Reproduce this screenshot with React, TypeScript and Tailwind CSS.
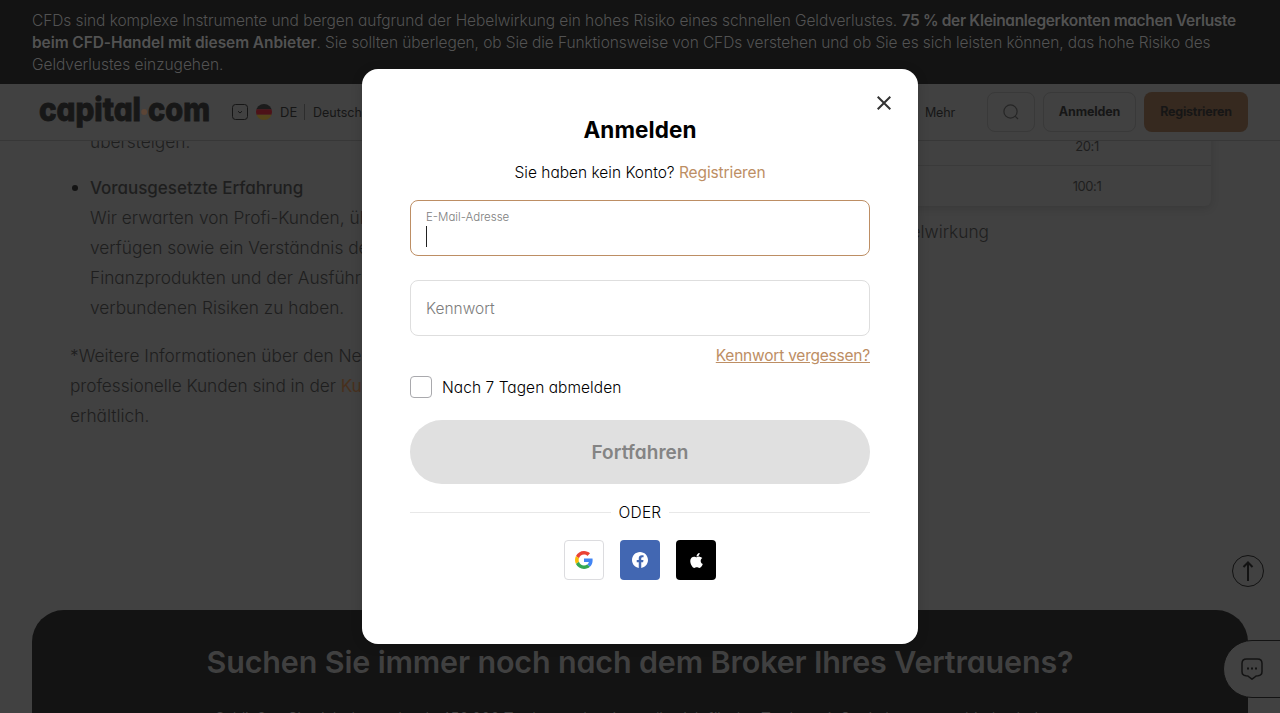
import { FaApple } from 'react-icons/fa';

function Banner() {
  return (
    <div className="h-[84px] shrink-0 bg-[#131313] pt-[9.5px] pl-8 text-[15.5px] leading-[22.4px] font-light text-[#525252] whitespace-nowrap">
      <div>
        <span className="tracking-[-0.07px]">
          CFDs sind komplexe Instrumente und bergen aufgrund der Hebelwirkung ein hohes Risiko eines schnellen Geldverlustes.
        </span>{' '}
        <b className="font-semibold tracking-[-0.33px]">75 % der Kleinanlegerkonten machen Verluste</b>
      </div>
      <div>
        <b className="font-semibold tracking-[-0.08px]">beim CFD-Handel mit diesem Anbieter</b>
        <span className="tracking-[-0.1px]">
          . Sie sollten überlegen, ob Sie die Funktionsweise von CFDs verstehen und ob Sie es sich leisten können, das hohe Risiko des
        </span>
      </div>
      <div className="tracking-[-0.04px]">Geldverlustes einzugehen.</div>
    </div>
  );
}

function Logo() {
  return (
    <svg className="ml-[38px] block" width="174" height="44" viewBox="0 0 174 44" fill="#171717" fontWeight="800" fontSize="32">
      <text x="1" y="31" textLength="102" lengthAdjust="spacingAndGlyphs" stroke="#171717" strokeWidth="0.9">capital</text>
      <text x="110" y="31" textLength="62" lengthAdjust="spacingAndGlyphs" stroke="#171717" strokeWidth="0.9">com</text>
      <circle cx="106.200" cy="22" r="3" fill="#5c4536" />
    </svg>
  );
}

function Header() {
  return (
    <header className="flex h-[57px] shrink-0 items-center border-b border-[#373737] bg-[#414141] text-[12.5px] text-[#161616]">
      <Logo />
      <svg className="ml-5" width="16" height="16" viewBox="0 0 16 16" fill="none" stroke="#161616">
        <rect x="0.5" y="0.5" width="15" height="15" rx="3" />
        <path d="M6 7.2l2 1.8 2-1.8" />
      </svg>
      <svg className="ml-2" width="16" height="16" viewBox="0 0 16 16">
        <clipPath id="flag"><circle cx="8" cy="8" r="8" /></clipPath>
        <g clipPath="url(#flag)">
          <path fill="#1b1b1b" d="M0 0h16v5.3H0z" />
          <path fill="#4d1218" d="M0 5.3h16v5.4H0z" />
          <path fill="#54451a" d="M0 10.7h16V16H0z" />
        </g>
      </svg>
      <span className="mt-px ml-2 w-6 text-[13px]">DE</span>
      <span className="h-4 w-px bg-[#2d2d2d]" />
      <span className="mt-[2px] ml-2">Deutsch</span>
      <nav className="mt-[2px] mr-8 ml-auto tracking-[-0.15px]">Mehr</nav>
      <div className="mr-8 flex gap-2 text-[12.5px] font-bold">
        <div className="flex h-10 w-12 items-center justify-center rounded-lg border border-[#393939]">
          <svg width="16" height="16" viewBox="0 0 16 16" fill="none" stroke="#262626" strokeWidth="1.2">
            <circle cx="7.5" cy="7.5" r="6.6" />
            <path d="M12.3 12.3l2.7 2.7" />
          </svg>
        </div>
        <div className="flex h-10 w-[93px] items-center justify-center rounded-lg border border-[#393939] tracking-[-0.15px]">Anmelden</div>
        <div className="flex h-10 w-[104px] items-center justify-center rounded-lg bg-[#36291f] tracking-[-0.25px]">Registrieren</div>
      </div>
    </header>
  );
}

function Content() {
  return (
    <main className="flex h-[469px] shrink-0 justify-between overflow-hidden text-[17.3px] leading-[30px] font-light whitespace-nowrap text-[#1e1e1e]">
      <div className="-mt-[14px] w-[560px] pl-[70px]">
        <ul className="pl-5">
          <li>übersteigen.</li>
          <li className="mt-[16px]">
            <div className="-ml-5 flex items-center">
              <span className="mr-[12px] ml-[2px] size-[6px] rounded-full bg-[#131313]" />
              <b className="text-[17px] font-medium tracking-[-0.03px]">Vorausgesetzte Erfahrung</b>
            </div>
            <div>Wir erwarten von Profi-Kunden, über</div>
            <div>verfügen sowie ein Verständnis der</div>
            <div>Finanzprodukten und der Ausführung</div>
            <div>verbundenen Risiken zu haben.</div>
          </li>
        </ul>
        <div className="mt-[18px]">
          <div>*Weitere Informationen über den Neu</div>
          <div className="tracking-[-0.06px]">professionelle Kunden sind in der <span className="font-normal text-[#48301d]">Kunden</span></div>
          <div>erhältlich.</div>
        </div>
      </div>
      <div className="-mt-[15px] w-[571px] pr-[69px]">
        <div className="rounded-md text-[13px] leading-none font-normal tracking-[-0.4px] shadow-[0_2px_8px_rgba(0,0,0,0.13)]">
          <div className="flex h-10 items-center justify-end border-b border-[#3a3a3a]">
            <span className="w-[248px] pt-[2px] text-center">20:1</span>
          </div>
          <div className="flex h-10 items-center justify-end">
            <span className="w-[248px] text-center">100:1</span>
          </div>
        </div>
        <div className="mt-[11px] w-[280px] text-right">Hebelwirkung</div>
      </div>
    </main>
  );
}

function Promo() {
  return (
    <section className="mx-8 h-[240px] shrink-0 rounded-t-[32px] bg-[#131313] pt-[32px] text-center whitespace-nowrap text-[#404040]">
      <h2 className="text-[30.5px] leading-10 font-semibold tracking-[-0.16px]">Suchen Sie immer noch nach dem Broker Ihres Vertrauens?</h2>
      <p className="mt-[24px] -ml-6 pl-[20px] text-[15.5px] leading-[26px] font-light tracking-[-0.28px]">
        Schließen Sie sich den mehr als 450.000 Tradern weltweit an, die sich für das Traden mit Capital.com entschieden haben
      </p>
    </section>
  );
}

function GoogleIcon() {
  return (
    <svg width="18" height="18" viewBox="0 0 48 48">
      <path fill="#EA4335" d="M24 9.5c3.54 0 6.71 1.22 9.21 3.6l6.85-6.85C35.9 2.38 30.47 0 24 0 14.62 0 6.51 5.38 2.56 13.22l7.98 6.19C12.43 13.72 17.74 9.5 24 9.5z" />
      <path fill="#4285F4" d="M46.98 24.55c0-1.57-.15-3.09-.38-4.55H24v9.02h12.94c-.58 2.96-2.26 5.48-4.78 7.18l7.73 6c4.51-4.18 7.09-10.36 7.09-17.65z" />
      <path fill="#FBBC05" d="M10.53 28.59c-.48-1.45-.76-2.99-.76-4.59s.27-3.14.76-4.59l-7.98-6.19C.92 16.46 0 20.12 0 24c0 3.88.92 7.54 2.56 10.78l7.97-6.19z" />
      <path fill="#34A853" d="M24 48c6.48 0 11.93-2.13 15.89-5.81l-7.73-6c-2.15 1.45-4.92 2.3-8.16 2.3-6.26 0-11.57-4.22-13.47-9.91l-7.98 6.19C6.51 42.62 14.62 48 24 48z" />
    </svg>
  );
}

function LoginDialog() {
  return (
    <div className="relative flex h-[575px] w-[556px] flex-col rounded-2xl bg-white px-12 text-[15.5px] font-light whitespace-nowrap text-black shadow-[0_2px_12px_rgba(0,0,0,0.15)]">
      <button className="absolute top-[27px] right-[27px]" aria-label="Schließen">
        <svg width="14" height="14" viewBox="0 0 14 14" fill="none" stroke="#333" strokeWidth="2">
          <path d="M0.7 0.7l12.6 12.6M13.3 0.7L0.7 13.3" />
        </svg>
      </button>
      <h1 className="mt-[45px] text-center text-[22.5px] leading-8 font-bold tracking-[0.1px]">Anmelden</h1>
      <p className="mt-[15px] text-center leading-6">
        Sie haben kein Konto? <a className="font-normal tracking-[-0.12px] text-[#bd8e64]">Registrieren</a>
      </p>
      <div className="mt-[15px] flex h-14 flex-col rounded-lg border border-[#bd8e64] pt-[8px] pl-[15px]">
        <span className="text-[11.5px] leading-4 text-[#7d7d7d]">E-Mail-Adresse</span>
        <span className="mt-px h-[21px] w-px bg-[#222]" />
      </div>
      <div className="mt-6 flex h-14 items-center rounded-lg border border-[#dedede] pt-px pl-[15px] text-[#7d7d7d]">Kennwort</div>
      <a className="mt-2 h-6 self-end leading-6 font-normal tracking-[-0.22px] text-[#bd8e64] underline underline-offset-1">Kennwort vergessen?</a>
      <label className="mt-2 flex h-[22px] items-center tracking-[0.05px]">
        <span className="mr-[10px] size-[22px] rounded border border-[#a9a9ad]" />
        <span className="pt-px">Nach 7 Tagen abmelden</span>
      </label>
      <button className="mt-[22px] h-16 rounded-[32px] bg-[#e0e0e0] pt-[2px] text-[19px] font-semibold tracking-[0.05px] text-[#848484]">Fortfahren</button>
      <div className="mt-4 flex h-6 items-center gap-2">
        <span className="mt-px h-px flex-1 bg-[#e8e8e8]" />
        <span className="pt-px tracking-[0.2px]">ODER</span>
        <span className="mt-px h-px flex-1 bg-[#e8e8e8]" />
      </div>
      <div className="mt-4 flex justify-center gap-4">
        <button className="flex size-10 items-center justify-center rounded border border-[#dcdcdf]"><GoogleIcon /></button>
        <button className="flex size-10 items-center justify-center rounded bg-[#4267b2]">
          <svg width="16" height="16" viewBox="0 0 24 24" fill="#fff">
            <path d="M24 12.07C24 5.4 18.63 0 12 0S0 5.4 0 12.07C0 18.1 4.39 23.1 10.13 24v-8.44H7.08v-3.49h3.05V9.41c0-3.02 1.79-4.69 4.53-4.69 1.31 0 2.68.24 2.68.24v2.97h-1.51c-1.49 0-1.96.93-1.96 1.89v2.25h3.33l-.53 3.49h-2.8V24C19.61 23.1 24 18.1 24 12.07z" />
          </svg>
        </button>
        <button className="flex size-10 items-center justify-center rounded bg-black"><FaApple size={17} color="#fff" /></button>
      </div>
    </div>
  );
}

export default function App() {
  return (
    <div className="relative flex h-[713px] w-[1280px] flex-col overflow-hidden bg-[#414141] font-['Inter',sans-serif] [font-feature-settings:'cv11']">
      <Banner />
      <Header />
      <Content />
      <Promo />
      <svg className="absolute top-[555px] left-[1232px]" width="32" height="32" viewBox="0 0 32 32" fill="none" stroke="#131313">
        <circle cx="16" cy="16" r="15.5" />
        <path strokeWidth="2" d="M16 26V7.5M11.5 12L16 7.5l4.5 4.5" />
      </svg>
      <div className="absolute top-[640px] left-[1223px] flex h-[58px] w-[60px] items-center rounded-l-[29px] border border-[#131313] bg-[#414141] pl-[17px]">
        <svg width="22" height="22" viewBox="0 0 22 22" fill="none" stroke="#131313" strokeWidth="1.5">
          <path d="M5.5 1h11Q21 1 21 5.5v8q0 4-4 4.300-2.500 0-3.500 1.500L11 21.200l-2.500-1.900Q7.500 17.800 5 17.800 1 17.500 1 13.500v-8Q1 1 5.500 1z" />
          <path fill="#131313" stroke="none" d="M6 9.500h2v2H6zM10 9.500h2v2h-2zM14 9.500h2v2h-2z" />
        </svg>
      </div>
      <div className="absolute inset-0 flex items-center justify-center">
        <LoginDialog />
      </div>
    </div>
  );
}
